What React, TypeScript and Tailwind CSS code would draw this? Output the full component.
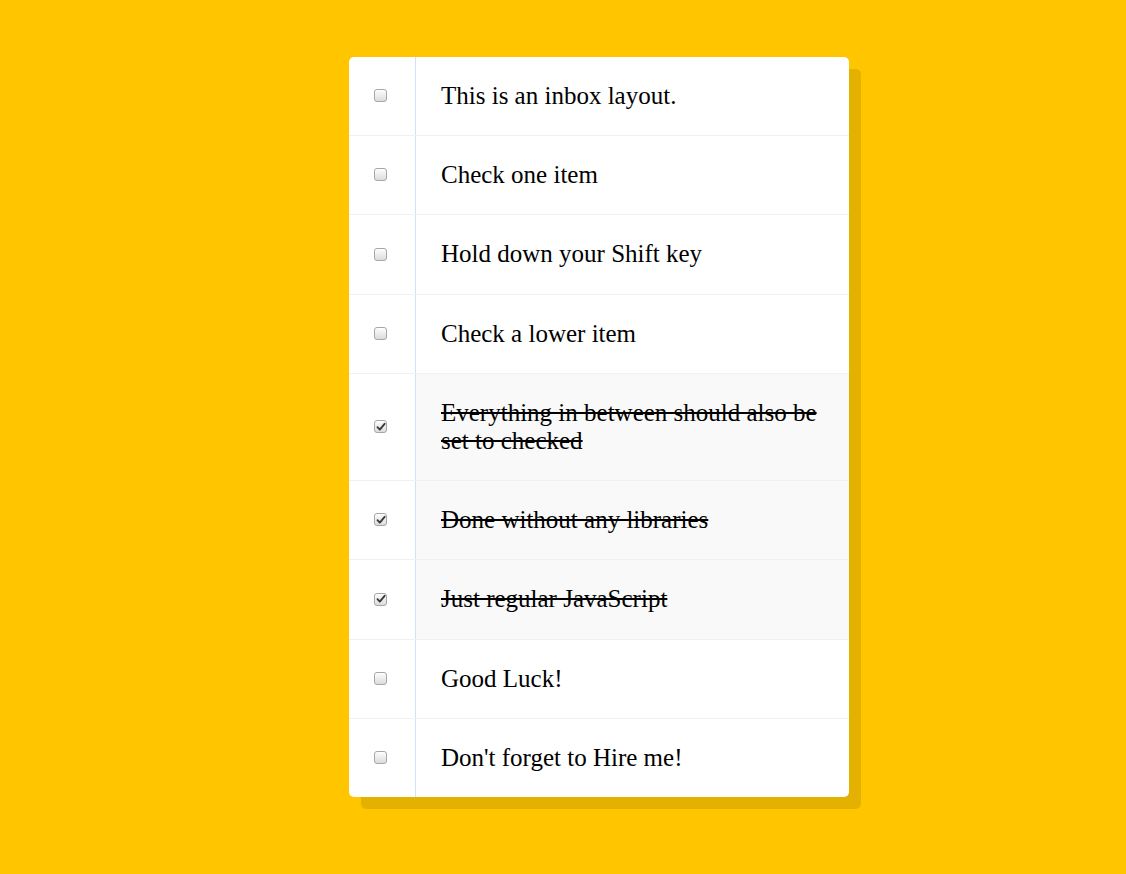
const items = [
  { text: "This is an inbox layout.", done: false },
  { text: "Check one item", done: false },
  { text: "Hold down your Shift key", done: false },
  { text: "Check a lower item", done: false },
  { text: "Everything in between should also be set to checked", done: true },
  { text: "Done without any libraries", done: true },
  { text: "Just regular JavaScript", done: true },
  { text: "Good Luck!", done: false },
  { text: "Don't forget to Hire me!", done: false },
];

function Box({ checked }: { checked: boolean }) {
  return (
    <span className="flex h-[13px] w-[13px] items-center justify-center rounded-[3px] border border-[#a6a6a6] bg-gradient-to-b from-[#fcfcfc] to-[#dcdcdc] shadow-[inset_0_1px_1px_rgba(255,255,255,0.8)]">
      {checked && (
        <svg width="10" height="10" viewBox="0 0 10 10">
          <path d="M1.5 5.2 L3.8 7.6 L8.6 1.8" fill="none" stroke="#3a3a3a" strokeWidth="1.9" strokeLinecap="round" strokeLinejoin="round" />
        </svg>
      )}
    </span>
  );
}

export default function App() {
  return (
    <div className="min-h-screen bg-[#ffc600] pt-[57px]" style={{ fontFamily: '"Liberation Serif", "Times New Roman", serif' }}>
      <div className="ml-[349px] w-[500px] rounded-[5px] bg-white shadow-[12px_12px_0_rgba(0,0,0,0.1)]">
        {items.map((item, i) => (
          <div
            key={i}
            className={`flex items-stretch ${i < items.length - 1 ? "border-b border-[#f1f1f1]" : ""}`}
          >
            <div className="flex w-[67px] shrink-0 items-center justify-center border-r border-[#d1e2ff] pb-[1px] pr-[3px]">
              <Box checked={item.done} />
            </div>
            <p
              className={`flex-1 px-[25px] py-[25px] text-[25px] leading-[28.2px] text-black ${
                item.done ? "bg-[#f9f9f9] line-through" : ""
              } ${i === 0 ? "rounded-tr-[5px]" : ""} ${i === items.length - 1 ? "rounded-br-[5px]" : ""}`}
            >
              {item.text}
            </p>
          </div>
        ))}
      </div>
    </div>
  );
}
